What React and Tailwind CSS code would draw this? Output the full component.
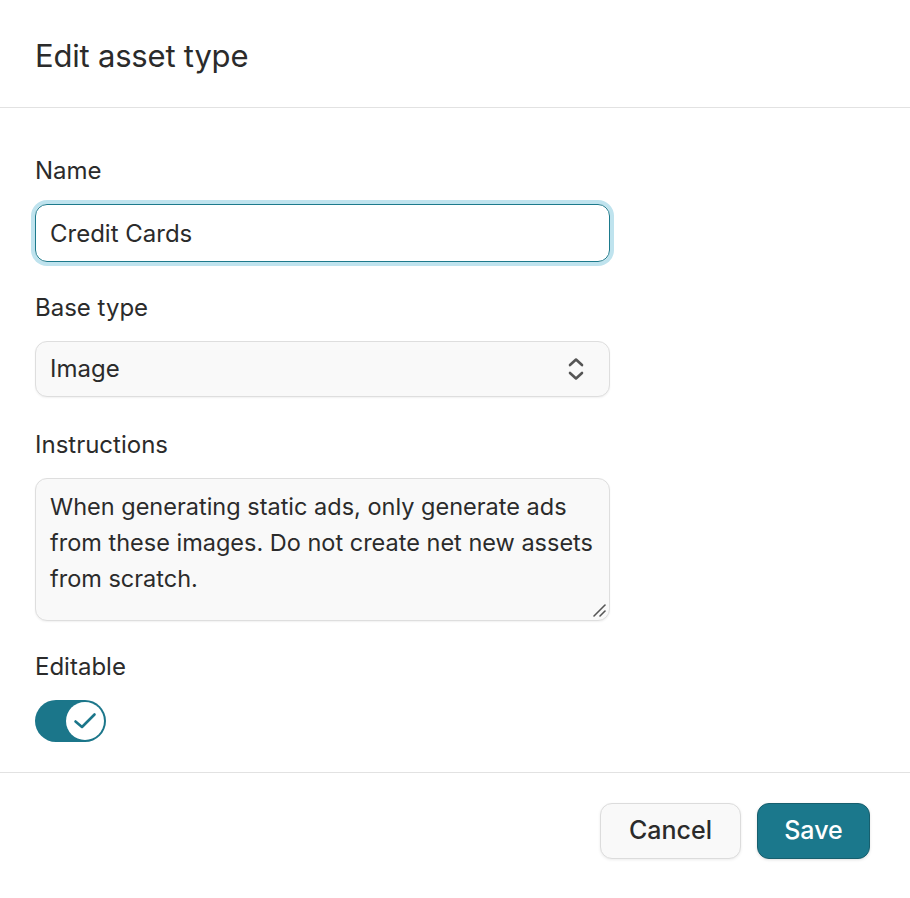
import React, { useState } from 'react';

const Label = ({ children }) => (
    <div className="text-[24px] leading-[30px] text-[#2b2b2b] mb-[18px]">{children}</div>
);

export default function App() {
    const [name, setName] = useState('Credit Cards');
    const [editable, setEditable] = useState(true);

    return (
        <div className="min-h-screen w-full bg-white text-[#2b2b2b] font-['Inter','Noto_Sans',sans-serif]">
            {/* Header */}
            <div className="h-[108px] flex items-center px-[35px] pt-[6px] border-b border-[#e2e2e2]">
                <h1 className="text-[31px] font-normal tracking-[-0.2px] text-[#2b2b2b]">Edit asset type</h1>
            </div>

            {/* Body */}
            <div className="px-[35px] pt-[48px] pb-[30px] flex flex-col gap-[31px] border-b border-[#e2e2e2]">
                <div>
                    <Label>Name</Label>
                    <div className="w-[575px] rounded-[12px] ring-[4px] ring-[#bfe3ee]">
                        <input
                            value={name}
                            onChange={(e) => setName(e.target.value)}
                            className="w-full h-[58px] rounded-[12px] border border-[#1d7a8c] bg-white px-[14px] text-[24px] text-[#2b2b2b] outline-none"
                        />
                    </div>
                </div>

                <div>
                    <Label>Base type</Label>
                    <div className="relative w-[575px] h-[56px] rounded-[12px] border border-[#dedede] bg-[#f9f9f9] shadow-[0_1px_2px_rgba(0,0,0,0.06)] flex items-center px-[14px] text-[24px]">
                        Image
                        <svg className="absolute right-[24px] top-1/2 -translate-y-1/2" width="18" height="26" viewBox="0 0 18 26" fill="none" stroke="#555" strokeWidth="2.6" strokeLinecap="round" strokeLinejoin="round">
                            <path d="M3 9 L9 3.5 L15 9" />
                            <path d="M3 17 L9 22.5 L15 17" />
                        </svg>
                    </div>
                </div>

                <div className="mt-[2px]">
                    <Label>Instructions</Label>
                    <div className="relative w-[575px] h-[143px] rounded-[12px] border border-[#dedede] bg-[#f9f9f9] shadow-[0_1px_2px_rgba(0,0,0,0.06)] pl-[14px] pr-[10px] pt-[10px] text-[23.5px] leading-[36px]">
                        When generating static ads, only generate ads from these images. Do not create net new assets from scratch.
                        <svg className="absolute right-[2px] bottom-[2px]" width="16" height="16" viewBox="0 0 16 16" stroke="#555" strokeWidth="1.6" strokeLinecap="round">
                            <path d="M3 14 L14 3" />
                            <path d="M9 14 L14 9" />
                        </svg>
                    </div>
                </div>

                <div>
                    <Label>Editable</Label>
                    <button
                        onClick={() => setEditable(!editable)}
                        className={`w-[71px] h-[42px] rounded-full p-[2px] flex items-center ${editable ? 'bg-[#1b768a] justify-end' : 'bg-[#d4d4d4] justify-start'}`}
                    >
                        <span className="w-[38px] h-[38px] rounded-full bg-white flex items-center justify-center">
                            {editable && (
                                <svg width="26" height="26" viewBox="0 0 26 26" fill="none" stroke="#1b768a" strokeWidth="2.6" strokeLinecap="round" strokeLinejoin="round">
                                    <path d="M3.5 13.5 L10 19 L22.5 6.5" />
                                </svg>
                            )}
                        </span>
                    </button>
                </div>
            </div>

            {/* Footer */}
            <div className="flex justify-end gap-[16px] px-[40px] pt-[30px] pb-[40px]">
                <button className="w-[141px] h-[56px] rounded-[12px] border border-[#dcdcdc] bg-[#f9f9f9] shadow-[0_1px_3px_rgba(0,0,0,0.08)] text-[25px] font-medium text-[#2b2b2b]">
                    Cancel
                </button>
                <button className="w-[113px] h-[56px] rounded-[12px] border border-[#175f6e] bg-[#1b788c] shadow-[0_1px_3px_rgba(0,0,0,0.12)] text-[25px] font-medium text-white">
                    Save
                </button>
            </div>
        </div>
    );
}
